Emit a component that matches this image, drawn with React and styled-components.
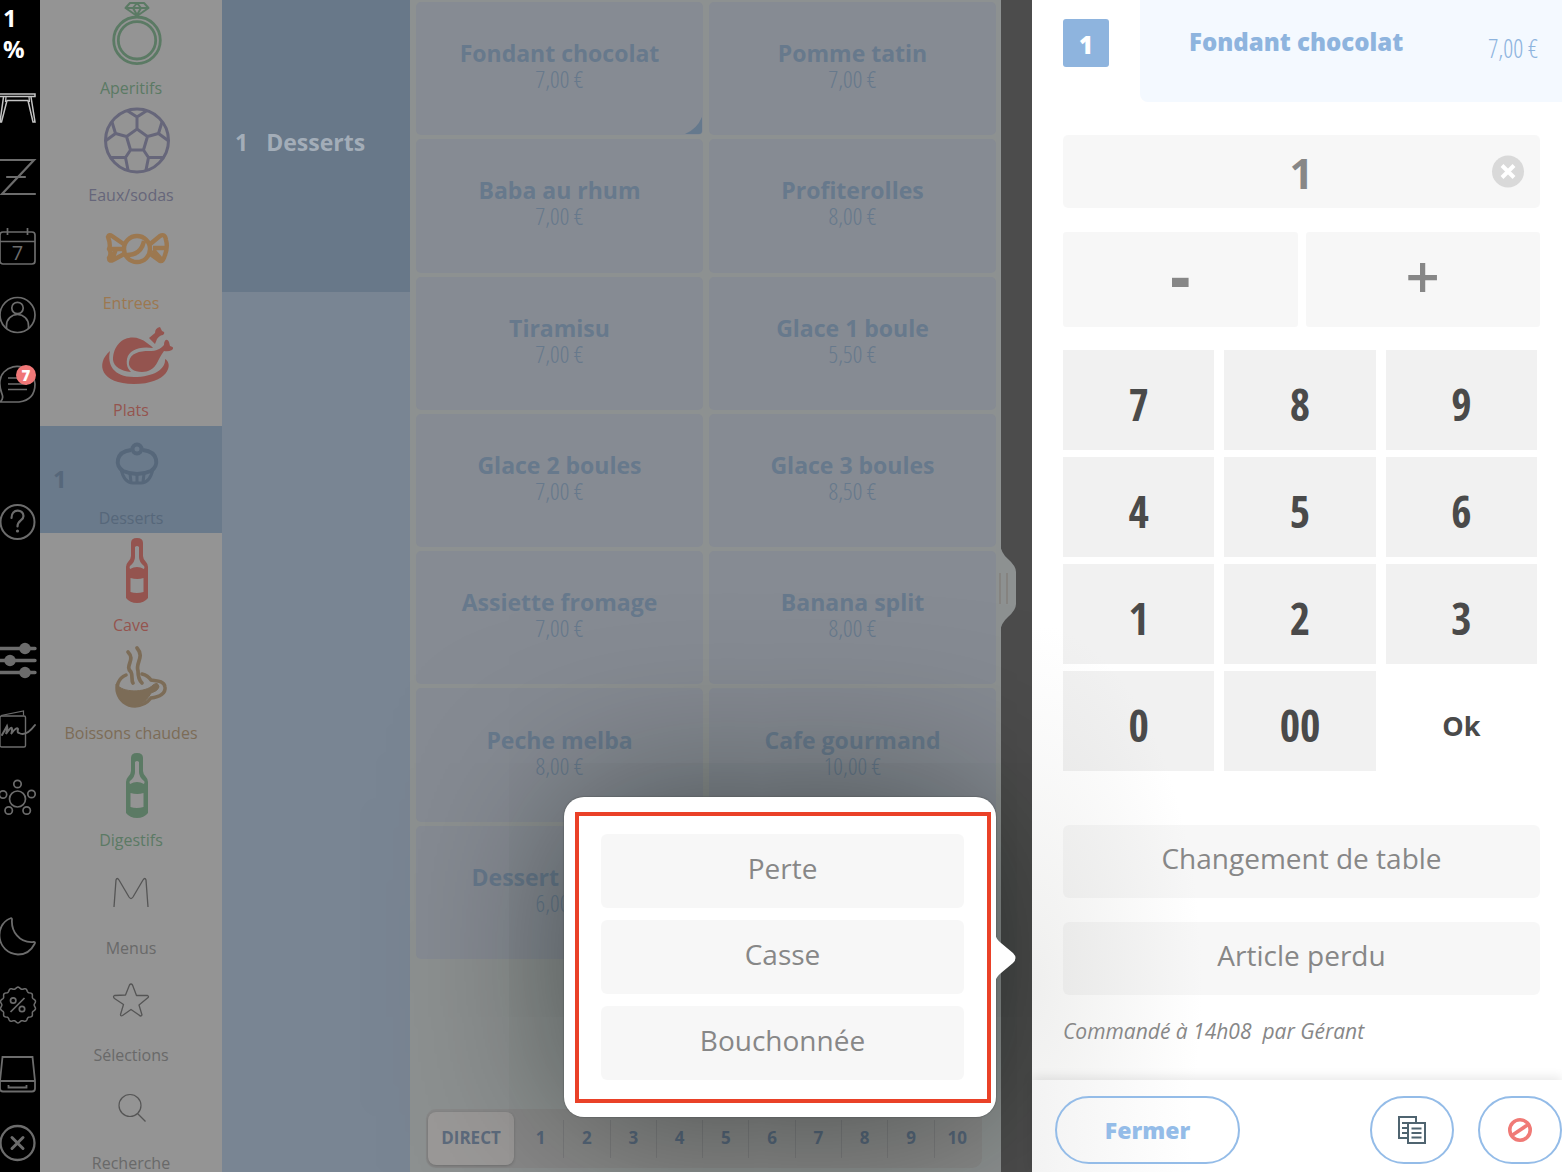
import React, { useCallback, useState } from 'react';
import styled, { createGlobalStyle, ThemeProvider } from 'styled-components';

const theme = {
  font: "'Open Sans', 'Noto Sans', sans-serif",
  narrow: "'Open Sans Condensed', 'Open Sans', sans-serif",
  narrowLight: "'Open Sans Condensed Light', 'Roboto Condensed', 'Open Sans Condensed', sans-serif",
  blue: '#8eb4de',
  steel: '#67798c',
  key: 'rgba(0, 0, 0, 0.033)',
  grey: '#878787',
};

const GlobalStyle = createGlobalStyle`
  * {
    box-sizing: border-box;
  }

  body {
    margin: 0;
    background: #fff;
    font-family: ${theme.font};
  }

  button, input {
    margin: 0;
    padding: 0;
    border: 0;
    font-family: inherit;
    cursor: pointer;
  }

  svg {
    display: block;
    overflow: visible;
  }
`;

const Screen = styled.div`
  display: flex;
  height: 100vh;
  overflow: hidden;
`;

const Stage = styled.div`
  position: relative;
  display: flex;
  flex: 1;
  min-width: 0;
  background: #4c4c4c;
`;

/* Left rail */

const Rail = styled.nav`
  display: flex;
  flex: 0 0 40px;
  flex-direction: column;
  background: #000;
`;

const Battery = styled.div`
  flex: 0 0 73px;
  padding: 2px 0 0 3px;
  color: #fff;
  font-size: 24px;
  font-weight: 700;
  line-height: 31px;
`;

const RailButton = styled.button`
  position: relative;
  flex: 0 0 69px;
  width: 36px;
  margin-top: ${({ $spaced }) => ($spaced ? '69px' : 0)};
  background: none;
  color: ${({ $active }) => ($active ? '#c4c4c4' : '#6c6c6c')};
`;

const Badge = styled.span`
  position: absolute;
  top: 16px;
  right: 0;
  width: 20px;
  border-radius: 10px;
  background: #f07777;
  color: #fff;
  font-size: 15px;
  font-weight: 800;
  line-height: 20px;
`;

/* Categories */

const Categories = styled.nav`
  flex: 0 0 182px;
  overflow: hidden;
  background: #949494;
`;

const CategoryList = styled.div`
  display: flex;
  flex-direction: column;
  height: calc(100% + 10px);
  margin-top: -4px;
`;

const CategoryButton = styled.button`
  position: relative;
  display: flex;
  flex: 1;
  flex-direction: column;
  align-items: center;
  justify-content: flex-start;
  padding-top: 5px;
  background: ${({ $selected }) => ($selected ? '#6a7a8b' : 'transparent')};
  color: ${({ $color }) => $color};
  font-size: 16px;
  line-height: 20px;

  svg {
    margin: 0 0 9px 12px;
  }
`;

const CategoryCount = styled.span`
  position: absolute;
  top: 43px;
  left: 13px;
  color: #56677a;
  font-size: 24px;
  font-weight: 700;
`;

const SubCategories = styled.div`
  flex: 0 0 188px;
  background: #798593;
`;

const SubCategoryButton = styled.button`
  display: flex;
  align-items: center;
  gap: 18px;
  width: 100%;
  height: 292px;
  padding: 0 0 8px 13px;
  background: #687889;
  color: #a3adb8;
  font-size: 23px;
  font-weight: 700;
`;

/* Products */

const Products = styled.main`
  display: flex;
  flex: 1;
  flex-direction: column;
  min-width: 0;
  margin-right: 31px;
  padding: 2px 5px 4px 6px;
  background: #8d9191;
`;

const ProductGrid = styled.div`
  display: grid;
  flex: 1;
  grid-template-columns: 1fr 1fr;
  grid-auto-rows: 1fr;
  gap: 4px 6px;
  margin-bottom: 150px;
`;

const ProductCard = styled.button`
  position: relative;
  display: flex;
  flex-direction: column;
  align-items: center;
  justify-content: center;
  padding-bottom: 7px;
  border-radius: 5px;
  background: #868b93;
  color: ${({ theme }) => theme.steel};
`;

const ProductName = styled.span`
  font-size: 23px;
  font-weight: 700;
  line-height: 28px;
`;

const ProductPrice = styled.span`
  font-family: ${({ theme }) => theme.narrowLight};
  font-size: 24px;
  line-height: 24px;
`;

const Corner = styled.svg`
  position: absolute;
  right: 1px;
  bottom: 1px;
`;

const Courses = styled.div`
  display: flex;
  align-items: center;
  height: 59px;
  margin: 0 14px 0 10px;
  padding: 0 2px;
  border-radius: 10px;
  background: #898989;
`;

const CourseButton = styled.button`
  flex: 1;
  height: 38px;
  padding-bottom: 3px;
  border-left: ${({ $first }) => ($first ? 0 : '1px solid #7c7c7e')};
  background: none;
  color: #56667a;
  font-size: 17px;
  font-weight: 700;
`;

const DirectButton = styled.button`
  flex: 0 0 86px;
  height: 53px;
  margin-right: 4px;
  padding-bottom: 3px;
  border-radius: 8px;
  background: #9b9998;
  box-shadow: 0 1px 3px rgba(0, 0, 0, 0.2);
  color: #5d6b7d;
  font-size: 17px;
  font-weight: 700;
`;

const Handle = styled.svg`
  position: absolute;
  top: 544px;
  right: 15px;
`;

/* Popover */

const Popover = styled.div`
  position: absolute;
  right: 36px;
  bottom: 55px;
  width: 432px;
  padding: 15px 5px 14px 11px;
  border-radius: 20px;
  background: #fff;
  box-shadow: 0 0 1px 1px rgba(80, 85, 85, 0.4), 0 0 170px rgba(0, 12, 6, 0.5);
`;

const PopoverFrame = styled.div`
  display: flex;
  flex-direction: column;
  gap: 12px;
  padding: 18px 23px 19px 22px;
  border: 4px solid #ea4128;
`;

const PopoverTail = styled.svg`
  position: absolute;
  right: -20px;
  bottom: 135px;
`;

const WideButton = styled.button`
  width: 100%;
  height: 74px;
  padding-bottom: 7px;
  border-radius: 6px;
  background: ${({ theme }) => theme.key};
  color: ${({ theme }) => theme.grey};
  font-size: 28px;
`;

/* Order line panel */

const Panel = styled.aside`
  position: relative;
  display: flex;
  flex: 0 0 530px;
  flex-direction: column;
  background: radial-gradient(170px 360px at 0 84%, #efefee, #fff);
`;

const PanelHeader = styled.header`
  display: flex;
  gap: 31px;
  height: 102px;
  padding-left: 31px;
`;

const Quantity = styled.div`
  width: 46px;
  height: 48px;
  margin-top: 19px;
  border-radius: 3px;
  background: ${({ theme }) => theme.blue};
  color: #fff;
  font-size: 24px;
  font-weight: 800;
  line-height: 52px;
  text-align: center;
`;

const PanelTitle = styled.div`
  display: flex;
  flex: 1;
  align-items: flex-start;
  justify-content: space-between;
  padding: 24px 24px 0 49px;
  border-radius: 0 0 0 8px;
  background: #f4f9ff;
  color: ${({ theme }) => theme.blue};
`;

const PanelName = styled.h1`
  margin: 0;
  font-size: 24px;
  font-weight: 800;
  line-height: 36px;
`;

const PanelPrice = styled.span`
  padding-top: 6px;
  font-family: ${({ theme }) => theme.narrowLight};
  font-size: 25px;
  line-height: 36px;
`;

const PanelBody = styled.div`
  display: flex;
  flex: 1;
  flex-direction: column;
  padding: 33px 22px 0 31px;
`;

const AmountField = styled.div`
  position: relative;
  height: 73px;
  margin-bottom: 24px;
`;

const AmountInput = styled.input`
  width: 100%;
  height: 100%;
  padding-top: 2px;
  border-radius: 5px;
  background: ${({ theme }) => theme.key};
  color: ${({ theme }) => theme.grey};
  font-size: 42px;
  font-weight: 700;
  text-align: center;
`;

const ClearButton = styled.button`
  position: absolute;
  top: 20px;
  right: 16px;
  background: none;
`;

const StepRow = styled.div`
  display: flex;
  gap: 8px;
  margin-bottom: 23px;
`;

const StepButton = styled.button`
  flex: 1;
  height: 95px;
  padding-bottom: 8px;
  border-radius: 3px;
  background: ${({ theme }) => theme.key};
  color: ${({ theme }) => theme.grey};
  font-size: 60px;
  font-weight: ${({ $heavy }) => ($heavy ? 800 : 600)};
  line-height: 80px;
`;

const Keypad = styled.div`
  display: grid;
  grid-template-columns: repeat(3, 1fr);
  gap: 7px 10px;
  margin: 0 3px 54px 0;
`;

const Key = styled.button`
  height: 100px;
  padding-top: 8px;
  background: rgba(0, 0, 0, 0.053);
  color: #4a4a4a;
  font-family: ${({ theme }) => theme.narrow};
  font-size: 44px;
  font-weight: 700;
`;

const OkKey = styled(Key)`
  background: none;
  font-family: ${({ theme }) => theme.font};
  font-size: 27px;
`;

const Actions = styled.div`
  display: flex;
  flex-direction: column;
  gap: 24px;
`;

const PanelAction = styled(WideButton)`
  height: 73px;
`;

const OrderInfo = styled.p`
  margin: 22px 0 0;
  color: ${({ theme }) => theme.grey};
  font-size: 21px;
  font-style: italic;
  line-height: 28px;
  white-space: pre;
`;

const PanelFooter = styled.footer`
  display: flex;
  gap: 24px;
  height: 92px;
  padding: 16px 0 8px 23px;
  background: linear-gradient(90deg, #f3f3f3, #fff 160px);
  box-shadow: 0 -3px 10px rgba(0, 0, 0, 0.09);
`;

const RoundButton = styled.button`
  display: flex;
  flex: 0 0 ${({ $wide }) => ($wide ? '185px' : '84px')};
  align-items: center;
  justify-content: center;
  height: 68px;
  margin-right: ${({ $wide }) => ($wide ? 'auto' : 0)};
  border: 2px solid #94bce8;
  border-radius: 34px;
  background: none;
  color: #94bce8;
  font-size: 23px;
  font-weight: 800;
`;

/* Rail drawings, all on a 36px square */

const scallop = () => {
  const points = [];
  for (let i = 0; i <= 168; i += 1) {
    const angle = (i / 168) * Math.PI * 2;
    const r = 17 + Math.cos(angle * 14) * 0.9;
    points.push(
      `${(18 + r * Math.sin(angle)).toFixed(2)} ${(18 - r * Math.cos(angle)).toFixed(2)}`
    );
  }
  return `M${points.join('L')}Z`;
};

const railItems = [
  {
    id: 'Tables',
    active: true,
    icon: (
      <>
        <path d="M-1 4h36v2.500H-1zM3.500 7 0 32h1.500L7 10.500h21L33 32h2L31 7" strokeWidth="1.500" />
        <path d="M6 7 5.500 12M29 7l.5 5" strokeWidth="1.300" />
      </>
    ),
  },
  { id: 'Z', icon: <path d="M-1 1h35L2 35h33M7 18h18" strokeWidth="2.200" strokeLinecap="round" /> },
  {
    id: 'Calendrier',
    icon: (
      <>
        <rect x="0" y="4" width="35" height="32" rx="3" />
        <path d="M0 13.500h35M7.500 0v7M27.500 0v7" />
        <text x="17.500" y="32" fontSize="20" textAnchor="middle" fill="currentColor" stroke="none">
          7
        </text>
      </>
    ),
  },
  {
    id: 'Compte',
    icon: (
      <>
        <circle cx="17.500" cy="18" r="17.500" />
        <circle cx="17.500" cy="11" r="5.700" />
        <path d="M6.500 31.500v-3a11 11 0 0 1 22 0v3" />
      </>
    ),
  },
  {
    id: 'Messages',
    badge: '7',
    icon: (
      <path d="M0 36q4-3 2-8C-2 18 0 10 4 6A18 18 0 0 1 35 18q0 16-16 18zM8 12h19M8 18h19M8 23.500h19" />
    ),
  },
  {
    id: 'Aide',
    spaced: true,
    icon: (
      <>
        <circle cx="17.500" cy="18" r="17" strokeWidth="2" />
        <path
          d="M11.500 14c0-10 12-9 12-2 0 5-6 4-6 10.500"
          strokeWidth="2.200"
          strokeLinecap="round"
        />
        <circle cx="17.500" cy="27" r="1.600" fill="currentColor" stroke="none" />
      </>
    ),
  },
  {
    id: 'Réglages',
    spaced: true,
    icon: (
      <>
        <path d="M0 6.500h35M0 18.500h35M0 30.500h35" strokeWidth="3.400" strokeLinecap="round" />
        <g fill="currentColor" stroke="none">
          <circle cx="25" cy="6.500" r="5.700" />
          <circle cx="10" cy="18.500" r="5.700" />
          <circle cx="25" cy="30.500" r="5.700" />
        </g>
      </>
    ),
  },
  {
    id: 'Carte',
    icon: (
      <>
        <rect x="0" y="5" width="25.500" height="31" rx="1.500" strokeWidth="1.400" />
        <path d="M1 4.500 23.500 0v4.500" strokeWidth="1.200" />
        <path
          d="M2 24 7 15q1 3-1 8 6-9 6-5t-1 5q6-8 7-5-1 4 1 4 7 4 16-8"
          strokeWidth="2"
          strokeLinecap="round"
        />
      </>
    ),
  },
  {
    id: 'Réseau',
    icon: (
      <>
        <circle cx="17.500" cy="19" r="8" />
        <circle cx="17.500" cy="4" r="3.700" />
        <circle cx="31.500" cy="14" r="3.700" />
        <circle cx="26.700" cy="30.500" r="3.700" />
        <circle cx="8.700" cy="30.500" r="3.700" />
        <circle cx="3" cy="14.500" r="3.700" />
      </>
    ),
  },
  {
    id: 'Nuit',
    spaced: true,
    icon: (
      <path
        d="M10 .5q2-1 2 1C11 13 19 25 33 24q3-.5 1.500 2C31 33 25 36.500 18 36.500-4 35-6 7 10 .5z"
        strokeLinejoin="round"
        strokeWidth="1.800"
      />
    ),
  },
  {
    id: 'Remises',
    icon: (
      <>
        <path d={scallop()} strokeWidth="1.500" />
        <path d="m10.500 25 14-14" />
        <circle cx="13.200" cy="13.500" r="2.700" />
        <circle cx="22" cy="22" r="2.700" />
      </>
    ),
  },
  {
    id: 'Tiroir',
    icon: (
      <path
        d="M2.500 1h30L35 25v7.500q0 3-3 3H3q-3 0-3-3V25zM0 25h35M8.500 29v2.500h18V29"
        strokeWidth="1.800"
      />
    ),
  },
  {
    id: 'Quitter',
    icon: (
      <>
        <circle cx="17.500" cy="18" r="17" strokeWidth="2.300" />
        <path d="m12 12.500 11 11m0-11-11 11" strokeWidth="3" strokeLinecap="round" />
      </>
    ),
  },
];

/* Category drawings, all on a 68px square */

const Bottle = () => (
  <g fill="currentColor" fillRule="evenodd">
    <path d="M28 5q0-5 6-5t6 5v13q0 3 3 6 2 2 2 5v31q-4 5-11 5t-11-5V29q0-3 2-5 3-3 3-6zM32 9v10q0 5-5 9-1 1 0 3 7-4 14 0 1-2 0-3-5-4-5-9V9q-2-2-4 0zM27.500 40v14q6 2 13 0V40q-6 2-13 0z" />
  </g>
);

const categories = [
  {
    name: 'Aperitifs',
    color: '#5b7a64',
    icon: (
      <g fill="none" stroke="currentColor" strokeWidth="2.800">
        <circle cx="34" cy="39.300" r="23.300" />
        <circle cx="34" cy="39.300" r="18.700" />
        <path d="M27 2h14l4.500 5L34 15 22.500 7zM22.500 7h23M30 7l4 7 4-7-4-5z" strokeWidth="2" strokeLinejoin="round" />
      </g>
    ),
  },
  {
    name: 'Eaux/sodas',
    color: '#66667a',
    icon: (
      <g fill="none" stroke="currentColor" strokeWidth="3">
        <circle cx="34" cy="32.500" r="31.500" />
        <path d="M34 21l10.500 7.500L40.500 42h-13l-4-13.500zM34 21V9M24 2.500 34 9l10-6.500M44.500 28.500l11-3L59 14M55.500 25.500 65 32.500M40.500 42l5 7.500H60M45.500 49.500 43 62M27.500 42l-5 7.500H8M22.500 49.500 25 62M23.500 28.500l-11-3L9 14M12.500 25.500 3 32.500" />
      </g>
    ),
  },
  {
    name: 'Entrees',
    color: '#9c7850',
    icon: (
      <g fill="none" stroke="currentColor" strokeWidth="4.400" strokeLinejoin="round">
        <circle cx="34" cy="33" r="13" />
        <path d="M22 29 9 20q-3-2-4 1 3 8 1 12 3 4 0 9 0 4 4 2l13-7M8 33h11M9 44l4-11M46 29l11-9q5-3 6 4 2 7-1 15-2 7-5 6L46 37M50 32h13M50 34l8 9M24 39q14 0 17-14" />
      </g>
    ),
  },
  {
    name: 'Plats',
    color: '#94544f',
    icon: (
      <g fill="currentColor">
        <path d="M7 28C-8 41-2 61 31 61c34 0 40-20 31-25 1 10-11 18-31 18C10 54 4 41 7 28z" />
        <path d="M10 37c0-21 20-29 34-17 2 2 5 3 6 5-14-2-24 2-26 11-1 6 1 10 4 13-10-1-17-5-18-12z" />
        <path d="M26 39c1-9 11-11 20-11 8 0 11-2 15-6 0-5 3-7 5-3l1 4q5 1 2 4-4 2-8 1c-3 4-5 8-7 12-3 6-9 9-15 9-8 0-14-4-13-10z" />
        <path d="M46 15l6-5q0-5 5-6l2 4q4 1 1 4-3 0-6 4l-2 5z" />
      </g>
    ),
  },
  {
    name: 'Desserts',
    color: '#56677a',
    count: 1,
    selected: true,
    icon: (
      <g fill="none" stroke="currentColor" strokeWidth="4">
        <path d="M28 19C12 21 12 35 20 40q14 6 28 0c8-5 8-19-8-21" />
        <circle cx="34" cy="18" r="4.500" />
        <path d="M18 38q3 14 12 14h8q9 0 12-14M27 43l1 8M34 44v7M41 43l-1 8" strokeWidth="3" />
      </g>
    ),
  },
  { name: 'Cave', color: '#94544f', icon: <Bottle /> },
  {
    name: 'Boissons chaudes',
    color: '#7c6c57',
    icon: (
      <g fill="none" stroke="currentColor">
        <path d="M23 29c-16 7-9 31 9 31 8 0 12-3 16-8 9-1 15-5 14-11-1-7-10-6-14-7-2-3-5-5-9-6" strokeWidth="3.500" strokeLinecap="round" />
        <path d="M14 38c4 9 29 9 36 1q5-4 6 2-1 4-8 6C37 68 14 61 13 38z" fill="currentColor" strokeWidth="1" />
        <path d="M25 6c8 8-4 14 3 20 2 4 0 8 2 11M34 2c8 9-2 15 1 23 0 5 1 9 4 12" strokeWidth="3.700" strokeLinecap="round" />
      </g>
    ),
  },
  { name: 'Digestifs', color: '#5b7a64', icon: <Bottle /> },
  {
    name: 'Menus',
    color: '#696969',
    icon: <path d="M11 46 13 19q1-3 3 0l10 17q2 3 4 0l10-17q2-3 3 0l2 27" fill="none" stroke="#555" strokeWidth="1.300" />,
  },
  {
    name: 'Sélections',
    color: '#696969',
    icon: (
      <path
        d="M26.500 17q1.500-2 3 0l4 10.500h11q2 1 0 2.500l-8.500 7 3 10q-1 2-3 0l-8-5.500-8.500 6q-2 1-2-1l3-10-9-6q-2-2 0-3l11-.5z"
        fill="none"
        stroke="#555"
        strokeWidth="1.300"
        strokeLinejoin="round"
      />
    ),
  },
  {
    name: 'Recherche',
    color: '#696969',
    icon: (
      <g fill="none" stroke="#555" strokeWidth="1.200">
        <circle cx="27" cy="29.500" r="11" />
        <path d="m34.500 37.500 8 8" />
      </g>
    ),
  },
];

const products = [
  ['Fondant chocolat', '7,00 €'],
  ['Pomme tatin', '7,00 €'],
  ['Baba au rhum', '7,00 €'],
  ['Profiterolles', '8,00 €'],
  ['Tiramisu', '7,00 €'],
  ['Glace 1 boule', '5,50 €'],
  ['Glace 2 boules', '7,00 €'],
  ['Glace 3 boules', '8,50 €'],
  ['Assiette fromage', '7,00 €'],
  ['Banana split', '8,00 €'],
  ['Peche melba', '8,00 €'],
  ['Cafe gourmand', '10,00 €'],
  ['Dessert du jour', '6,00 €'],
];

const courses = [1, 2, 3, 4, 5, 6, 7, 8, 9, 10];
const keys = ['7', '8', '9', '4', '5', '6', '1', '2', '3', '0', '00'];
const reasons = ['Perte', 'Casse', 'Bouchonnée'];

const SideRail = () => (
  <Rail>
    <Battery>
      1<br />%
    </Battery>
    {railItems.map(({ id, icon, active, spaced, badge }) => (
      <RailButton key={id} aria-label={id} $active={active} $spaced={spaced}>
        <svg width="36" height="36" viewBox="0 0 36 36" fill="none" stroke="currentColor" strokeWidth="1.700">
          {icon}
        </svg>
        {badge && <Badge>{badge}</Badge>}
      </RailButton>
    ))}
  </Rail>
);

const OrderPanel = () => {
  const [amount, setAmount] = useState('1');

  const handleKey = useCallback((value) => setAmount((current) => current + value), []);
  const handleStep = useCallback(
    (step) => setAmount((current) => String(Math.max(0, Number(current) + step))),
    []
  );

  return (
    <Panel>
      <PanelHeader>
        <Quantity>1</Quantity>
        <PanelTitle>
          <PanelName>Fondant chocolat</PanelName>
          <PanelPrice>7,00 €</PanelPrice>
        </PanelTitle>
      </PanelHeader>
      <PanelBody>
        <AmountField>
          <AmountInput
            aria-label="Quantité"
            value={amount}
            onChange={({ target }) => setAmount(target.value)}
          />
          <ClearButton aria-label="Effacer" onClick={() => setAmount('')}>
            <svg width="32" height="33" viewBox="0 0 32 33">
              <circle cx="16" cy="16.500" r="16" fill="#d9d9d9" />
              <path d="m10 10.500 12 12m0-12-12 12" stroke="#fff" strokeWidth="4" />
            </svg>
          </ClearButton>
        </AmountField>
        <StepRow>
          <StepButton $heavy onClick={() => handleStep(-1)}>
            -
          </StepButton>
          <StepButton onClick={() => handleStep(1)}>+</StepButton>
        </StepRow>
        <Keypad>
          {keys.map((value) => (
            <Key key={value} onClick={() => handleKey(value)}>
              {value}
            </Key>
          ))}
          <OkKey>Ok</OkKey>
        </Keypad>
        <Actions>
          <PanelAction>Changement de table</PanelAction>
          <PanelAction>Article perdu</PanelAction>
        </Actions>
        <OrderInfo>{'Commandé à 14h08  par Gérant'}</OrderInfo>
      </PanelBody>
      <PanelFooter>
        <RoundButton $wide>Fermer</RoundButton>
        <RoundButton aria-label="Dupliquer">
          <svg width="28" height="28" viewBox="0 0 28 28" fill="none" stroke="#4f6470" strokeWidth="2">
            <path d="M9 22H1V1h17v5M4 7h5M4 12h5M4 17h5" />
            <path d="M10 7h17v20H10zM13.500 12.500h10M13.500 17h10M13.500 21.500h10" />
          </svg>
        </RoundButton>
        <RoundButton aria-label="Annuler">
          <svg width="24" height="24" viewBox="0 0 24 24" fill="none" stroke="#f07a76" strokeWidth="3.600">
            <circle cx="12" cy="12" r="10.200" />
            <path d="m4.500 17 15-10" />
          </svg>
        </RoundButton>
      </PanelFooter>
    </Panel>
  );
};

const App = () => (
  <ThemeProvider theme={theme}>
    <GlobalStyle />
    <Screen>
      <Stage>
        <SideRail />
        <Categories>
          <CategoryList>
            {categories.map(({ name, color, icon, count, selected }) => (
              <CategoryButton key={name} $color={color} $selected={selected}>
                <svg width="68" height="68" viewBox="0 0 68 68">
                  {icon}
                </svg>
                {name}
                {count && <CategoryCount>{count}</CategoryCount>}
              </CategoryButton>
            ))}
          </CategoryList>
        </Categories>
        <SubCategories>
          <SubCategoryButton>
            <span>1</span>
            <span>Desserts</span>
          </SubCategoryButton>
        </SubCategories>
        <Products>
          <ProductGrid>
            {products.map(([name, price], index) => (
              <ProductCard key={name}>
                <ProductName>{name}</ProductName>
                <ProductPrice>{price}</ProductPrice>
                {index === 0 && (
                  <Corner width="17" height="17" viewBox="0 0 17 17">
                    <path d="M17 0v14q0 3-3 3H0Q12 12 17 0z" fill="#65798d" />
                  </Corner>
                )}
              </ProductCard>
            ))}
          </ProductGrid>
          <Courses>
            <DirectButton>DIRECT</DirectButton>
            {courses.map((course) => (
              <CourseButton key={course} $first={course === 1}>
                {course}
              </CourseButton>
            ))}
          </Courses>
        </Products>
        <Handle width="17" height="88" viewBox="0 0 17 88">
          <path d="M0 0q1 9 8 15 8 7 8 13v32q0 6-8 13-7 6-8 15z" fill="#8d9191" />
          <path d="M0 29v31M7 29v31" stroke="#858380" strokeWidth="2" />
        </Handle>
        <Popover>
          <PopoverFrame>
            {reasons.map((reason) => (
              <WideButton key={reason}>{reason}</WideButton>
            ))}
          </PopoverFrame>
          <PopoverTail width="21" height="48" viewBox="0 0 21 48">
            <path d="M0 0q1 5 6 9l12 10q5 5 0 10L6 39q-5 4-6 9z" fill="#fff" />
          </PopoverTail>
        </Popover>
      </Stage>
      <OrderPanel />
    </Screen>
  </ThemeProvider>
);

export default App;
